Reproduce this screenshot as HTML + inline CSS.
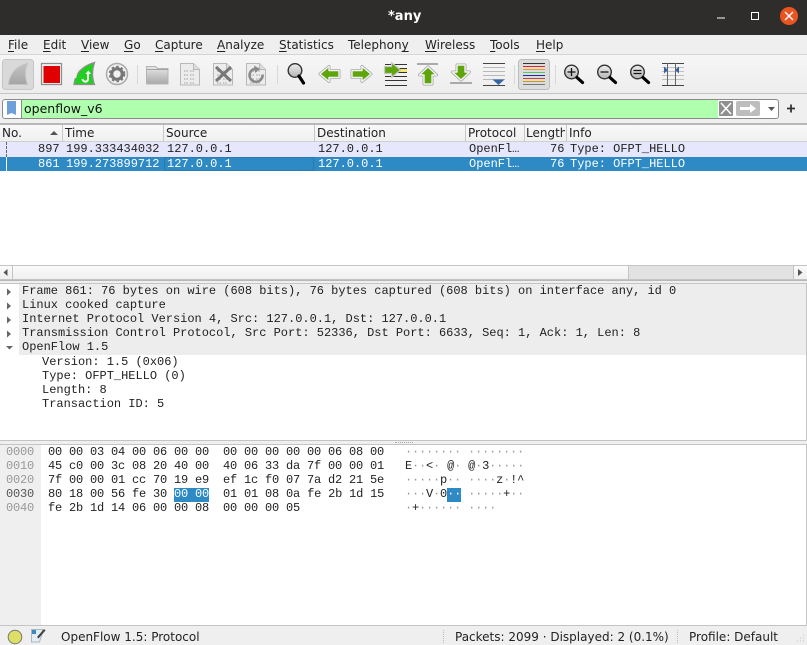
<!DOCTYPE html>
<html><head><meta charset="utf-8"><style>
*{box-sizing:border-box}
html,body{margin:0;padding:0;width:807px;height:645px;overflow:hidden;background:#efefef}
body{position:relative;font-family:"DejaVu Sans","Liberation Sans",sans-serif;font-size:12px;color:#222}
.a{position:absolute}
.t{position:absolute;white-space:pre;line-height:14px}
.m{font-family:"Liberation Mono",monospace;font-size:12px;color:#222;letter-spacing:-0.012px}
.menu{position:absolute;top:37px;line-height:16px;font-size:12px;color:#222;white-space:pre}
.menu u{text-underline-offset:2px}
.h{position:absolute;top:126px;line-height:15px;font-size:12px;color:#222;white-space:pre}
.hs{position:absolute;top:125px;width:1px;height:17px;background:#c8c8c8}
.m.hex{letter-spacing:-0.2px}
</style></head><body>
<div class="a" style="left:0;top:0;width:807px;height:35px;background:#2f2d2c"></div>
<div class="t" style="left:388px;top:10px;color:#fff;font-weight:bold;font-size:13px;font-family:'DejaVu Sans',sans-serif">*any</div>
<svg class="a" style="left:700px;top:0" width="107" height="35">
<rect x="17" y="17.5" width="8" height="1" fill="#fff"/>
<rect x="51.5" y="12.5" width="7" height="7" fill="none" stroke="#fff"/>
<circle cx="89" cy="16" r="9" fill="#e95420"/>
<path d="M85 12l8 8M93 12l-8 8" stroke="#fff" stroke-width="1.4"/>
</svg>

<div class="a" style="left:0;top:35px;width:807px;height:20px;background:#efefef;border-bottom:1px solid #d4d4d4"></div>
<div class="menu" style="left:8px"><u>F</u>ile</div>
<div class="menu" style="left:43px"><u>E</u>dit</div>
<div class="menu" style="left:81px"><u>V</u>iew</div>
<div class="menu" style="left:124px"><u>G</u>o</div>
<div class="menu" style="left:155px"><u>C</u>apture</div>
<div class="menu" style="left:217px"><u>A</u>nalyze</div>
<div class="menu" style="left:279px"><u>S</u>tatistics</div>
<div class="menu" style="left:348px">Telephon<u>y</u></div>
<div class="menu" style="left:425px"><u>W</u>ireless</div>
<div class="menu" style="left:490px"><u>T</u>ools</div>
<div class="menu" style="left:536px"><u>H</u>elp</div>

<div class="a" style="left:0;top:55px;width:807px;height:39px;background:linear-gradient(#f6f6f6,#ededed);border-bottom:1px solid #c4c4c4"></div>
<svg class="a" style="left:0;top:55px" width="807" height="39" viewBox="0 55 807 39">
<defs>
<linearGradient id="fold" x1="0" y1="0" x2="0" y2="1"><stop offset="0" stop-color="#e8e8e8"/><stop offset="1" stop-color="#a8a8a8"/></linearGradient>
<linearGradient id="fin" x1="0" y1="0" x2="0" y2="1"><stop offset="0" stop-color="#c4c4c4"/><stop offset="1" stop-color="#a4a4a4"/></linearGradient>
<linearGradient id="lens" x1="0" y1="0" x2="0" y2="1"><stop offset="0" stop-color="#eee"/><stop offset="1" stop-color="#b4b4b4"/></linearGradient>
</defs>
<rect x="2.5" y="59.5" width="31" height="30" rx="3" fill="#d9d9d9" stroke="#c6c6c6"/>
<path d="M8.500 84.500C9.500 74 16 66 27.500 63.500C24.500 70 25 78 27.500 84.500Z" fill="url(#fin)" stroke="#c4c4c4"/>
<rect x="41.500" y="63.500" width="20" height="21" fill="#f2f2f2" stroke="#8c8c8c" stroke-width="1.200"/>
<rect x="43.500" y="66" width="16.500" height="17" fill="#e00000"/>
<path d="M74 84.500C75 74 82 66 94.500 62.500C92 70 92 78 94.500 84.500Z" fill="#1fd01f" stroke="#8f8f8f" stroke-width="1.300"/>
<path d="M82 65.500C78 69 76 74 75.500 78" fill="none" stroke="#e8f0e8" stroke-width="1.400"/>
<path d="M88 73v6c0 3.500-5 3.500-5.500 0" fill="none" stroke="#fff" stroke-width="2"/>
<path d="M85.500 74l2.800-3.500 2.800 3.500z" fill="#fff"/>
<circle cx="117" cy="74" r="10.500" fill="#f2f2f2" stroke="#aaa" stroke-width="1.500"/>
<circle cx="117" cy="74" r="5.300" fill="none" stroke="#777" stroke-width="3.200"/>
<circle cx="117" cy="74" r="7.500" fill="none" stroke="#777" stroke-width="1.600" stroke-dasharray="2.500 2.400"/>
<rect x="137" y="65" width="1" height="19" fill="#d8d8d8"/>
<path d="M146.500 66.500h9l2 2h10.500v15.500h-21.500z" fill="url(#fold)" stroke="#b4b4b4"/>
<rect x="147" y="69" width="21" height="1" fill="#a4a4a4"/>
<g id="doc"><path d="M180.500 63.500h13l6 6v15.500h-19z" fill="#ececec" stroke="#b8b8b8"/><path d="M193.500 63.500v6h6" fill="#ddd" stroke="#b8b8b8"/>
<path d="M184 71h4M190 71h5M184 75h4M190 75h5M184 79h4M190 79h5M184 83h4M190 83h5" stroke="#c6c6c6" stroke-width="2" stroke-dasharray="1.500 1"/></g>
<use href="#doc" x="33"/>
<path d="M216 67l15 14M231 67l-15 14" stroke="#777" stroke-width="3"/>
<use href="#doc" x="66"/>
<path d="M259 69.500a6.500 6.500 0 1 0 3.500 5" fill="none" stroke="#8a8a8a" stroke-width="2.600"/><path d="M254 65.500l6 3.500-5 4z" fill="#8a8a8a"/>
<rect x="277" y="65" width="1" height="19" fill="#d8d8d8"/>
<circle cx="295" cy="70.500" r="6.800" fill="url(#lens)" stroke="#333" stroke-width="1.400"/>
<path d="M299 76l4.500 7" stroke="#000" stroke-width="3.200" stroke-linecap="round"/>
<g stroke-linejoin="round">
<g stroke="#aaa" stroke-width="3" fill="none">
<path d="M320 74l9-7.500v4h10v7h-10v4z"/>
<path d="M371 74l-9-7.500v4h-10v7h10v4z"/>
<path d="M428 67l8.500 8h-4.500v9h-8v-9h-4.500z"/>
<path d="M461 80l-8.500-8h4.500v-7h8v7h4.500z"/>
</g>
<g stroke="#f4f4f4" stroke-width="1.400" fill="#5ea50b">
<path d="M320 74l9-7.500v4h10v7h-10v4z"/>
<path d="M371 74l-9-7.500v4h-10v7h10v4z"/>
<path d="M428 67l8.500 8h-4.500v9h-8v-9h-4.500z"/>
<path d="M461 80l-8.500-8h4.500v-7h8v7h4.500z"/>
</g>
</g>
<g fill="#333"><rect x="385" y="64" width="22" height="1"/><rect x="385" y="68" width="22" height="1"/><rect x="385" y="72" width="22" height="1"/><rect x="385" y="76" width="22" height="1"/><rect x="385" y="80" width="22" height="1"/><rect x="385" y="85" width="22" height="1"/></g>
<rect x="399" y="69" width="8" height="3" fill="#f2e66c"/>
<path d="M384.500 66.500h7v-4l9 7.500-9 7.500v-4h-7z" fill="#5ea50b" stroke="#c8c8c8" stroke-width="1.300" stroke-linejoin="round"/>
<rect x="417" y="63" width="21" height="2" fill="#aaa"/>
<rect x="450" y="82" width="22" height="2" fill="#aaa"/>
<g fill="#b8b8b8"><rect x="483" y="67" width="22" height="1"/><rect x="483" y="71" width="22" height="1"/><rect x="483" y="75" width="22" height="1"/><rect x="483" y="79" width="22" height="1"/></g>
<rect x="483" y="63" width="22" height="1" fill="#444"/><rect x="483" y="85" width="22" height="1" fill="#444"/>
<path d="M492.500 79.500h12l-6 5.500z" fill="#3465a4"/>
<rect x="514" y="65" width="1" height="19" fill="#d8d8d8"/>
<rect x="518.500" y="59.500" width="31" height="30" rx="3" fill="#dcdcdc" stroke="#bcbcbc"/>
<rect x="523" y="63" width="22" height="1" fill="#333"/><rect x="523" y="66" width="22" height="1" fill="#e22"/><rect x="523" y="69" width="22" height="1" fill="#e2a020"/><rect x="523" y="72" width="22" height="1" fill="#5c5"/><rect x="523" y="75" width="22" height="1" fill="#22a"/><rect x="523" y="78" width="22" height="1" fill="#b44"/><rect x="523" y="81" width="22" height="1" fill="#c90"/><rect x="523" y="84" width="22" height="1" fill="#777"/>
<rect x="555" y="65" width="1" height="19" fill="#d8d8d8"/>
<g id="mag"><circle cx="571.500" cy="72" r="6.800" fill="url(#lens)" stroke="#333" stroke-width="1.400"/><path d="M577 77.500l5.500 5" stroke="#000" stroke-width="3.200" stroke-linecap="round"/></g>
<path d="M567.500 72h8M571.500 68v8" stroke="#111" stroke-width="1.300"/>
<use href="#mag" x="33"/><path d="M600.500 72h8" stroke="#111" stroke-width="1.300"/>
<use href="#mag" x="66"/><path d="M633.500 70.500h8M633.500 73.500h8" stroke="#111" stroke-width="1.300"/>
<g fill="#c0c0c0"><rect x="662" y="67" width="22" height="1"/><rect x="662" y="71" width="22" height="1"/><rect x="662" y="75" width="22" height="1"/><rect x="662" y="79" width="22" height="1"/></g>
<rect x="662" y="63" width="22" height="1" fill="#444"/><rect x="662" y="85" width="22" height="1" fill="#444"/>
<rect x="667" y="63" width="1" height="22" fill="#666"/><rect x="675" y="63" width="1" height="22" fill="#666"/>
<path d="M664 66.500l4 3.500-4 3.500zM679 66.500l-4 3.500 4 3.500z" fill="#3465a4"/>
</svg>

<div class="a" style="left:2px;top:99px;width:777px;height:19.500px;border:1px solid #8a8a8a;border-radius:3px;background:#fff"></div>
<div class="a" style="left:21px;top:100px;width:697px;height:17.500px;background:#afffaf;border-left:1px solid #8a8a8a"></div>
<svg class="a" style="left:0;top:96px" width="807" height="26" viewBox="0 96 807 26">
<path d="M7 101h9v14l-4.500-2-4.500 2z" fill="#6f9fd8"/>
<rect x="719" y="101" width="14" height="15" rx="1" fill="#8f8f8f"/>
<path d="M721 103l10 11M731 103l-10 11" stroke="#fff" stroke-width="1.500"/>
<rect x="736" y="101" width="24" height="15" rx="2" fill="#bdbdbd"/>
<path d="M740 107h10v-3l6 4.500-6 4.500v-3h-10z" fill="#fff"/>
<path d="M768 107h7l-3.500 4z" fill="#555"/>
<path d="M787 108.500h8M791 104.500v8" stroke="#333" stroke-width="1.800"/>
</svg>
<div class="t m" style="left:24px;top:102px;font-family:'DejaVu Sans',sans-serif;font-size:12.5px;color:#111;letter-spacing:0">openflow_v6</div>

<div class="a" style="left:0;top:123px;width:807px;height:158px;background:#fff;border-top:2px solid #b8b8b8;border-bottom:1px solid #b8b8b8"></div>
<div class="a" style="left:0;top:125px;width:807px;height:17px;background:linear-gradient(#f8f8f8,#f0f0f0);border-bottom:1px solid #d0d0d0"></div>
<div class="h" style="left:2px">No.</div><div class="h" style="left:65px">Time</div><div class="h" style="left:166px">Source</div><div class="h" style="left:317px">Destination</div><div class="h" style="left:468px">Protocol</div><div class="a" style="left:526px;top:126px;width:39px;height:15px;overflow:hidden;line-height:15px;white-space:pre">Length</div><div class="h" style="left:569px">Info</div>
<svg class="a" style="left:50px;top:130px" width="10" height="6"><path d="M0 5l4-4 4 4z" fill="#555"/></svg>
<div class="hs" style="left:62px"></div><div class="hs" style="left:163px"></div><div class="hs" style="left:314px"></div><div class="hs" style="left:465px"></div><div class="hs" style="left:524px"></div><div class="hs" style="left:566px"></div>

<div class="a" style="left:0;top:142px;width:807px;height:15px;background:#e6e6fc"></div>
<div class="a" style="left:0;top:157px;width:807px;height:14px;background:#2d8ac5"></div>
<div class="a" style="left:6px;top:142px;width:1px;height:15px;border-left:1px dashed #666"></div>
<div class="a" style="left:6px;top:157px;width:1px;height:14px;background:#fff"></div>
<div class="a" style="left:164px;top:157px;width:150px;height:14px;border:1px solid #2a7ab0"></div>
<div class="t m" style="left:38px;top:142px">897</div><div class="t m" style="left:66px;top:142px">199.333434032</div><div class="t m" style="left:167px;top:142px">127.0.0.1</div><div class="t m" style="left:318px;top:142px">127.0.0.1</div><div class="t m" style="left:469px;top:142px">OpenFl…</div><div class="t m" style="left:550px;top:142px">76</div><div class="t m" style="left:570px;top:142px">Type: OFPT_HELLO</div>
<div class="t m" style="left:38px;top:157px;color:#fff">861</div><div class="t m" style="left:66px;top:157px;color:#fff">199.273899712</div><div class="t m" style="left:167px;top:157px;color:#fff">127.0.0.1</div><div class="t m" style="left:318px;top:157px;color:#fff">127.0.0.1</div><div class="t m" style="left:469px;top:157px;color:#fff">OpenFl…</div><div class="t m" style="left:550px;top:157px;color:#fff">76</div><div class="t m" style="left:570px;top:157px;color:#fff">Type: OFPT_HELLO</div>

<div class="a" style="left:0;top:265px;width:807px;height:15px;background:linear-gradient(#fafafa,#f0f0f0);border-top:1px solid #c4c4c4;border-bottom:1px solid #c4c4c4"></div>
<div class="a" style="left:628px;top:266px;width:165px;height:13px;background:#e2e2e2;border-left:1px solid #c4c4c4"></div>
<div class="a" style="left:12px;top:266px;width:1px;height:13px;background:#c4c4c4"></div>
<div class="a" style="left:793px;top:266px;width:1px;height:13px;background:#c4c4c4"></div>
<svg class="a" style="left:0;top:266px" width="807" height="13"><path d="M7.500 3v7l-4-3.500z" fill="#555"/><path d="M798 3v7l4.500-3.500z" fill="#555"/></svg>

<div class="a" style="left:0;top:283px;width:807px;height:158px;background:#fff;border-top:1px solid #c4c4c4;border-bottom:1px solid #c4c4c4;border-right:1px solid #c4c4c4"></div>
<div class="a" style="left:19px;top:284px;width:787px;height:71px;background:#ededed"></div>
<svg class="a" style="left:0;top:284px" width="20" height="72"><path d="M7 4.500v7l4-3.500zM7 18.500v7l4-3.500zM7 32.500v7l4-3.500zM7 46.500v7l4-3.500z" fill="#666"/><path d="M6 62h7l-3.500 3.500z" fill="#666"/></svg>
<div class="t m" style="left:22px;top:284px">Frame 861: 76 bytes on wire (608 bits), 76 bytes captured (608 bits) on interface any, id 0</div>
<div class="t m" style="left:22px;top:298px">Linux cooked capture</div>
<div class="t m" style="left:22px;top:312px">Internet Protocol Version 4, Src: 127.0.0.1, Dst: 127.0.0.1</div>
<div class="t m" style="left:22px;top:326px">Transmission Control Protocol, Src Port: 52336, Dst Port: 6633, Seq: 1, Ack: 1, Len: 8</div>
<div class="t m" style="left:22px;top:340px">OpenFlow 1.5</div>
<div class="t m" style="left:42px;top:355px">Version: 1.5 (0x06)</div>
<div class="t m" style="left:42px;top:369px">Type: OFPT_HELLO (0)</div>
<div class="t m" style="left:42px;top:383px">Length: 8</div>
<div class="t m" style="left:42px;top:397px">Transaction ID: 5</div>

<div class="a" style="left:395px;top:442px;width:18px;height:1px;border-top:1px dotted #aaa"></div>
<div class="a" style="left:0;top:444px;width:807px;height:182px;background:#fff;border-top:1px solid #c4c4c4;border-bottom:1px solid #c4c4c4;border-right:1px solid #c4c4c4"></div>
<div class="a" style="left:0;top:445px;width:41px;height:180px;background:#efefef"></div>
<div class="a" style="left:174px;top:488px;width:35px;height:14px;background:#2d8ac5"></div>
<div class="a" style="left:447px;top:488px;width:14px;height:14px;background:#2d8ac5"></div>
<div class="t m hex" style="left:6px;top:445px;color:#999">0000</div>
<div class="t m hex" style="left:6px;top:459px;color:#999">0010</div>
<div class="t m hex" style="left:6px;top:473px;color:#999">0020</div>
<div class="t m hex" style="left:6px;top:487px;color:#555">0030</div>
<div class="t m hex" style="left:6px;top:501px;color:#999">0040</div>
<div class="t m hex" style="left:48px;top:445px">00 00 03 04 00 06 00 00  00 00 00 00 00 06 08 00</div>
<div class="t m hex" style="left:48px;top:459px">45 c0 00 3c 08 20 40 00  40 06 33 da 7f 00 00 01</div>
<div class="t m hex" style="left:48px;top:473px">7f 00 00 01 cc 70 19 e9  ef 1c f0 07 7a d2 21 5e</div>
<div class="t m hex" style="left:48px;top:487px">80 18 00 56 fe 30 <span style="color:#fff">00 00</span>  01 01 08 0a fe 2b 1d 15</div>
<div class="t m hex" style="left:48px;top:501px">fe 2b 1d 14 06 00 00 08  00 00 00 05</div>
<div class="t m hex" style="left:405px;top:445px"><span style="color:#999">········ ········</span></div>
<div class="t m hex" style="left:405px;top:459px">E<span style="color:#999">··</span>&lt;<span style="color:#999">·</span> @<span style="color:#999">·</span> @<span style="color:#999">·</span>3<span style="color:#999">·····</span></div>
<div class="t m hex" style="left:405px;top:473px"><span style="color:#999">·····</span>p<span style="color:#999">··</span> <span style="color:#999">····</span>z<span style="color:#999">·</span>!^</div>
<div class="t m hex" style="left:405px;top:487px"><span style="color:#999">···</span>V<span style="color:#999">·</span>0<span style="color:#fff">··</span> <span style="color:#999">·····</span>+<span style="color:#999">··</span></div>
<div class="t m hex" style="left:405px;top:501px"><span style="color:#999">·</span>+<span style="color:#999">······</span> <span style="color:#999">····</span></div>

<svg class="a" style="left:0;top:626px" width="60" height="19"><circle cx="15" cy="11" r="6.800" fill="#dfdf66" stroke="#777"/><path d="M31.500 3.500h11v3l-3 9.500h-8z" fill="#e4ecf4" stroke="#a8b8c4"/><path d="M37 11l7-8 1.500 1.500-7 8z" fill="#444"/><rect x="32" y="4" width="4" height="4" fill="#3a8ac0"/></svg>
<div class="t" style="left:61px;top:630px;font-size:12px">OpenFlow 1.5: Protocol</div>
<div class="t" style="left:455px;top:630px;font-size:12px">Packets: 2099 · Displayed: 2 (0.1%)</div>
<div class="t" style="left:689px;top:630px;font-size:12px">Profile: Default</div>
<div class="a" style="left:443px;top:630px;height:13px;border-left:1px dotted #bbb"></div>
<div class="a" style="left:677px;top:630px;height:13px;border-left:1px dotted #bbb"></div>
<svg class="a" style="left:796px;top:634px" width="10" height="10"><path d="M7 1h1M4 4h1M7 4h1M1 7h1M4 7h1M7 7h1" stroke="#c4c4c4"/></svg>
</body></html>
